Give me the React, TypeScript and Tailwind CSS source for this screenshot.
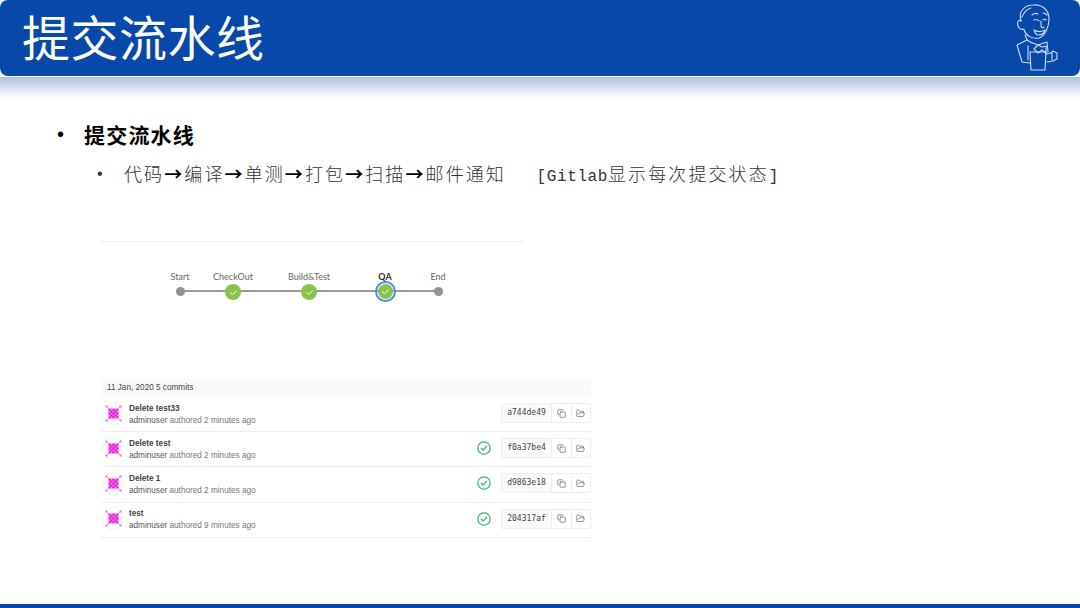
import { Copy, FolderOpen } from "lucide-react";

const cjk = "font-['Noto_Sans_CJK_SC','Liberation_Sans',sans-serif]";

const stages = [
  { name: "Start", left: 0, kind: "dot" },
  { name: "CheckOut", left: 53, kind: "ok" },
  { name: "Build&Test", left: 76, kind: "ok" },
  { name: "QA", left: 76, kind: "current" },
  { name: "End", left: 53, kind: "dot" },
];

const commits = [
  { title: "Delete test33", time: "2 minutes ago", sha: "a744de49", ok: false },
  { title: "Delete test", time: "2 minutes ago", sha: "f0a37be4", ok: true },
  { title: "Delete 1", time: "2 minutes ago", sha: "d9863e18", ok: true },
  { title: "test", time: "9 minutes ago", sha: "204317af", ok: true },
];

function Jenkins() {
  return (
    <svg width="50" height="76" viewBox="0 0 50 76" fill="none" stroke="#cfdcf1" strokeWidth="1.1" strokeLinecap="round" strokeLinejoin="round">
      <path d="M11 21C8 11 15 5 23 5C32 4 39 10 39 19C39 27 35 36 29 38C22 39 16 36 14 30" />
      <path d="M11 21C8 19 7 23 8 26C9 29 12 30 14 29" />
      <path d="M12 17C14 12 17 9 21 8" />
      <path d="M22 15C24 13 26 13 28 14M33 13C35 13 36 14 37 15" />
      <path d="M24 20C26 19 28 20 29 21M33 20C34 19 36 19 36 20" />
      <path d="M31 21L31 26C31 28 33 28 34 27" />
      <path d="M24 30C27 32 31 32 35 30C34 34 31 35 28 35C26 35 25 33 24 30Z" />
      <path d="M15 35L17 40L7 45L12 62L20 63" />
      <path d="M17 40C21 43 25 44 28 45L37 42L38 52" />
      <path d="M28 45L24 49L28 53L32 50L36 53L36 46L32 47Z" />
      <path d="M20 52L21 70L35 70L36 52L20 52Z" />
      <path d="M18 46L18 60" />
      <path d="M36 54L41 53L43 51L47 53L47 59L43 61L37 62" />
      <path d="M42 53L42 60" />
    </svg>
  );
}

function Identicon() {
  const cells = [0, 1, 2, 3, 4];
  return (
    <div className="w-[23px] h-[23px] rounded-full border border-[#f2f2f2] flex items-center justify-center shrink-0">
      <svg width="19" height="19" viewBox="0 0 19 19">
        <path d="M2.5 2.5L5 5M16.5 2.5L14 5M2.5 16.5L5 14M16.5 16.5L14 14" stroke="#f68cf2" strokeWidth="1" />
        <rect x="1.5" y="1.5" width="2" height="2" fill="#f36cee" />
        <rect x="15.5" y="1.5" width="2" height="2" fill="#f36cee" />
        <rect x="1.5" y="15.5" width="2" height="2" fill="#f36cee" />
        <rect x="15.5" y="15.5" width="2" height="2" fill="#f36cee" />
        <rect x="4.5" y="4.5" width="10" height="10" fill="#ef3fe4" />
        {cells.map((r) =>
          cells.map((c) => (
            <circle key={r + "-" + c} cx={5.5 + c * 2} cy={5.5 + r * 2} r="0.6" fill={(r + c) % 2 ? "#fa9cf4" : "#d60fcb"} />
          ))
        )}
      </svg>
    </div>
  );
}

function PassedIcon() {
  return (
    <svg width="14" height="14" viewBox="0 0 14 14" fill="none" stroke="#3fb46f" strokeLinecap="round" strokeLinejoin="round">
      <circle cx="7" cy="7" r="6.2" strokeWidth="1.2" />
      <path d="M4.4 7.2L6.2 9L9.6 5.4" strokeWidth="1.3" />
    </svg>
  );
}

function Pipeline() {
  return (
    <div className="relative w-[258px] h-[26px] ml-[80px] mt-[29px] flex items-end">
      <div className="absolute left-0 right-0 bottom-[5px] h-[2px] bg-[#999]" />
      {stages.map((s) => (
        <div key={s.name} style={{ marginLeft: s.left }} className="relative w-0 h-full flex flex-col items-center justify-between">
          <span className={"whitespace-nowrap text-[9px] leading-[12px] font-['Lato',sans-serif] " + (s.kind === "current" ? "text-[#333] font-bold" : "text-[#666]")}>{s.name}</span>
          {s.kind === "dot" ? (
            <span className="shrink-0 w-[9px] h-[9px] mb-[1.5px] rounded-full bg-[#919191]" />
          ) : (
            <span className={"shrink-0 rounded-full flex items-center justify-center bg-[#8bc34a] " + (s.kind === "current" ? "w-[15px] h-[15px] -mb-[2px] outline-2 outline-[#4a90e2] outline-offset-1" : "w-[16px] h-[16px] -mb-[3px]")}>
              <svg width="9" height="9" viewBox="0 0 9 9" fill="none" stroke="#fff" strokeWidth="1" strokeLinecap="round" strokeLinejoin="round">
                <path d="M1.5 4.8L3.6 6.6L7.5 2.8" />
              </svg>
            </span>
          )}
        </div>
      ))}
    </div>
  );
}

function CommitList() {
  return (
    <div className="w-[490px] ml-[1px] mt-[82px] font-['Liberation_Sans',sans-serif]">
      <div className="h-[18px] bg-[#fafafa] pl-[6px] flex items-center text-[8.2px] text-[#444]">11 Jan, 2020 5 commits</div>
      {commits.map((c) => (
        <div key={c.sha} className="h-[35.2px] pb-[2px] border-b border-[#eee] flex items-center">
          <div className="pl-[1px]">
            <Identicon />
          </div>
          <div className="ml-[4px] flex-1 pt-[3px]">
            <div className="text-[8.2px] leading-[12px] font-bold text-[#444]">{c.title}</div>
            <div className="text-[8.2px] leading-[12px] text-[#777]">
              <span className="text-[#555]">adminuser</span> authored {c.time}
            </div>
          </div>
          {c.ok && <PassedIcon />}
          <div className="ml-[10px] w-[90px] h-[20px] flex border border-[#eee] rounded-[2px] text-[#444]">
            <span className="w-[49px] bg-[#fafafa] flex items-center justify-center text-[8px] font-['DejaVu_Sans_Mono',monospace] text-[#444]">{c.sha}</span>
            <span className="flex-1 flex items-center justify-center border-x border-[#eee]">
              <Copy size={9} strokeWidth={1.5} />
            </span>
            <span className="flex-1 flex items-center justify-center">
              <FolderOpen size={9} strokeWidth={1.5} />
            </span>
          </div>
        </div>
      ))}
    </div>
  );
}

export default function App() {
  return (
    <div className={"w-[1080px] h-[608px] bg-white overflow-hidden flex flex-col " + cjk}>
      <header className="h-[76px] shrink-0 bg-[#0848a8] rounded-lg flex items-center justify-between pl-[22px] pr-[20px]">
        <h1 className="text-[48px] leading-none font-normal text-white tracking-[0.5px] pb-[6px]">提交流水线</h1>
        <Jenkins />
      </header>
      <div className="h-[21px] shrink-0 mt-[1px] bg-gradient-to-b from-[#b0c1df] to-white" />
      <main className="flex-1 pl-[57px] pt-[23px]">
        <div className="flex items-center h-[26px]">
          <span className="w-[27px] text-[20px] font-['Liberation_Sans',sans-serif] text-black">•</span>
          <span className="text-[21px] leading-none font-bold text-black tracking-[1.2px]">提交流水线</span>
        </div>
        <div className="flex items-center h-[26px] mt-[14px] ml-[40px] text-[#333]">
          <span className="w-[27px] text-[16px] font-['Liberation_Sans',sans-serif]">•</span>
          <span className="text-[18px] leading-none tracking-[2.1px] whitespace-pre font-light">
            代码<b className="font-bold text-black">→</b>编译<b className="font-bold text-black">→</b>单测<b className="font-bold text-black">→</b>打包<b className="font-bold text-black">→</b>扫描<b className="font-bold text-black">→</b>邮件通知
            <span className="font-['Liberation_Mono',monospace] text-[16px] tracking-[0.6px]">   [Gitlab</span>显示每次提交状态<span className="font-['Liberation_Mono',monospace] text-[16px]">]</span>
          </span>
        </div>
        <div className="ml-[43px] mt-[54px]">
          <div className="w-[423px] h-px bg-[#eee]" />
          <Pipeline />
          <CommitList />
        </div>
      </main>
      <footer className="h-[4px] shrink-0 bg-[#0848a8]" />
    </div>
  );
}
